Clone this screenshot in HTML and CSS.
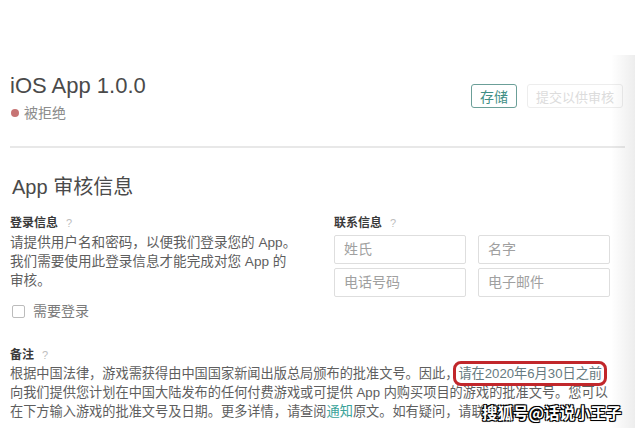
FILE: index.html
```html
<!DOCTYPE html>
<html lang="zh">
<head>
<meta charset="utf-8">
<link rel="stylesheet" href="styles.css">
</head>
<body>
<div class="page">
  <header class="header">
    <div class="title-block">
      <h1 class="title">iOS App 1.0.0</h1>
      <div class="status"><span class="dot"></span>被拒绝</div>
    </div>
    <div class="actions">
      <button class="btn btn-save">存储</button>
      <button class="btn btn-disabled">提交以供审核</button>
    </div>
  </header>
  <div class="divider"></div>

  <h2 class="section-title">App 审核信息</h2>

  <div class="grid">
    <div class="col">
      <div class="label">登录信息<span class="help">?</span></div>
      <p class="text">请提供用户名和密码，以便我们登录您的 App。<br>我们需要使用此登录信息才能完成对您 App 的<br>审核。</p>
      <label class="check"><span class="box"></span>需要登录</label>
    </div>
    <div class="col">
      <div class="label">联系信息<span class="help">?</span></div>
      <div class="inputs">
        <div class="input">姓氏</div>
        <div class="input">名字</div>
        <div class="input">电话号码</div>
        <div class="input">电子邮件</div>
      </div>
    </div>
  </div>

  <div class="label notes-label">备注<span class="help">?</span></div>
  <p class="text notes">根据中国法律，游戏需获得由中国国家新闻出版总局颁布的批准文号。因此，<span class="mark">请在2020年6月30日之前</span><br>向我们提供您计划在中国大陆发布的任何付费游戏或可提供 App 内购买项目的游戏的批准文号。您可以<br>在下方输入游戏的批准文号及日期。更多详情，请查阅<span class="link">通知</span>原文。如有疑问，请联系我们。</p>
</div>
<div class="shade"></div>
<div class="watermark">搜狐号@话说小王子</div>
</body>
</html>
```

FILE: styles.css
```css
html, body {
  margin: 0;
  padding: 0;
  background: #ffffff;
}
body {
  font-family: "Liberation Sans", "Noto Sans CJK SC", sans-serif;
  color: #5c5c5c;
  width: 635px;
  height: 428px;
  overflow: hidden;
  position: relative;
}
.page {
  padding: 73px 12px 0 10px;
}
.header {
  display: flex;
  justify-content: space-between;
  align-items: flex-start;
}
.title {
  margin: 0;
  font-size: 22px;
  line-height: 26px;
  font-weight: normal;
  color: #4a4a4a;
}
.status {
  margin-top: 5px;
  font-size: 14px;
  line-height: 18px;
  color: #8c8c8c;
  display: flex;
  align-items: center;
}
.dot {
  width: 8px;
  height: 8px;
  border-radius: 50%;
  background: #c77474;
  margin: 0 5px 0 1px;
}
.actions {
  display: flex;
  gap: 10px;
  margin-top: 11px;
}
.btn {
  font-family: "Liberation Sans", "Noto Sans CJK SC", sans-serif;
  font-size: 13px;
  height: 24px;
  padding: 0;
  background: #fff;
  border-radius: 3px;
}
.btn-save {
  width: 46px;
  border: 1.5px solid #6b9f98;
  color: #3f8f86;
  font-size: 14px;
}
.btn-disabled {
  width: 96px;
  border: 1px solid #ededed;
  color: #dcdcdc;
}
.divider {
  height: 2px;
  background: #e8e8e8;
  margin-top: 24px;
  margin-right: -2px;
}
.section-title {
  margin: 27px 0 0 2px;
  font-size: 20px;
  line-height: 24px;
  font-weight: normal;
  color: #4a4a4a;
}
.grid {
  display: grid;
  grid-template-columns: 312px 276px;
  column-gap: 12px;
  margin-top: 16px;
}
.label {
  font-size: 12px;
  line-height: 16px;
  font-weight: bold;
  color: #3a3a3a;
}
.help {
  font-weight: normal;
  color: #bdbdbd;
  font-size: 11px;
  margin-left: 8px;
}
.text {
  margin: 2px 0 0;
  font-size: 13.6px;
  line-height: 19px;
  color: #5e5e5e;
  white-space: nowrap;
}
.check {
  display: flex;
  align-items: center;
  margin-top: 13px;
  margin-left: 2px;
  font-size: 14px;
  line-height: 16px;
  color: #7a7a7a;
}
.box {
  width: 11px;
  height: 11px;
  border: 1px solid #bcbcbc;
  border-radius: 2px;
  margin-right: 8px;
}
.inputs {
  display: grid;
  grid-template-columns: 132px 132px;
  column-gap: 12px;
  row-gap: 4px;
  margin-top: 4px;
}
.input {
  height: 27px;
  border: 1px solid #dedede;
  border-radius: 2px;
  padding-left: 9px;
  font-size: 14px;
  line-height: 27px;
  color: #a0a0a0;
}
.notes-label {
  margin-top: 28px;
}
.notes {
  margin-top: 1px;
  font-size: 13.2px;
}
.mark {
  outline: 3px solid #c1272b;
  outline-offset: 2px;
  border-radius: 3px;
  color: #667a80;
}
.link {
  color: #3aa39a;
}
.shade {
  position: absolute;
  top: 55px;
  right: 0;
  width: 24px;
  bottom: 0;
  background: linear-gradient(to right, rgba(0,0,0,0), rgba(0,0,0,0.07));
}
.watermark {
  position: absolute;
  left: 482px;
  top: 401px;
  font-family: "Noto Sans CJK SC", sans-serif;
  font-weight: bold;
  font-size: 15.5px;
  line-height: 22px;
  color: #ffffff;
  text-shadow: -1px -1px 0 #000, 1px -1px 0 #000, -1px 1px 0 #000, 1px 1px 0 #000, 0 0 2px #000;
}
```
